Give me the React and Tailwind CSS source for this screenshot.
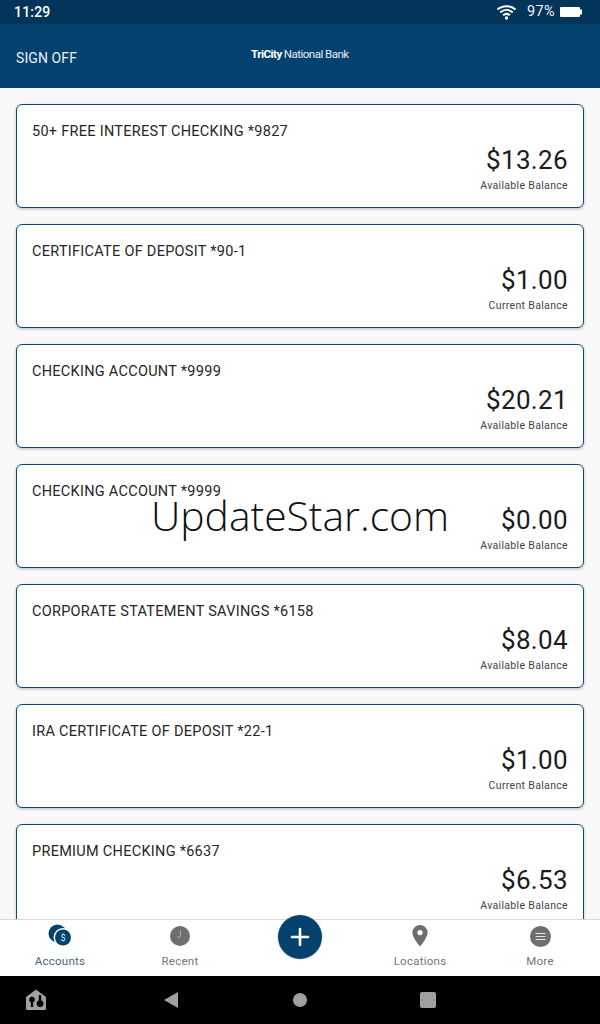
const accounts = [
  ["50+ FREE INTEREST CHECKING *9827", "$13.26", "Available Balance"],
  ["CERTIFICATE OF DEPOSIT *90-1", "$1.00", "Current Balance"],
  ["CHECKING ACCOUNT *9999", "$20.21", "Available Balance"],
  ["CHECKING ACCOUNT *9999", "$0.00", "Available Balance"],
  ["CORPORATE STATEMENT SAVINGS *6158", "$8.04", "Available Balance"],
  ["IRA CERTIFICATE OF DEPOSIT *22-1", "$1.00", "Current Balance"],
  ["PREMIUM CHECKING *6637", "$6.53", "Available Balance"],
];

function Card({ name, amount, label }) {
  return (
    <div className="h-[104px] shrink-0 rounded-[6px] border border-[#0b4a78] bg-white px-[15px] pt-[17px] shadow-[0_1px_3px_rgba(0,0,0,0.25)]">
      <div className="text-[14.5px] leading-[20px] tracking-[0.28px] text-[#262626]">{name}</div>
      <div className="mt-[2px] text-right text-[26px] leading-[32px] tracking-[0.35px] text-[#1c1c1c]">{amount}</div>
      <div className="mt-[1px] text-right text-[10.5px] leading-[18px] tracking-[0.33px] text-[#444444]">{label}</div>
    </div>
  );
}

function NavItem({ icon, label, active }) {
  return (
    <div className="flex w-[120px] flex-col items-center">
      <div className="flex h-[24px] w-[24px] items-center justify-center">{icon}</div>
      <div className={`mt-[5px] text-[11.5px] leading-[16px] tracking-[0.25px] ${active ? "text-[#46647f]" : "text-[#757575]"}`}>{label}</div>
    </div>
  );
}

export default function App() {
  return (
    <div className="relative flex h-[1024px] w-[600px] flex-col overflow-hidden bg-[#f8f8f8] font-['Roboto',sans-serif]">
      <div className="flex h-[24px] shrink-0 items-center justify-between bg-[#03355a] pl-[14px] pr-[18px] text-white">
        <span className="text-[14px] font-medium tracking-[0.2px]">11:29</span>
        <div className="flex items-center">
          <svg width="21" height="16" viewBox="0 0 20 16" fill="none" stroke="white" strokeWidth="2">
            <path d="M1 5.5C6 1 14 1 19 5.5" />
            <path d="M3.8 8.5C7.5 5.2 12.5 5.2 16.2 8.5" />
            <path d="M6.6 11.3C8.6 9.6 11.4 9.6 13.4 11.3" />
            <circle cx="10" cy="14" r="1.7" fill="white" stroke="none" />
          </svg>
          <span className="ml-[10px] text-[14.5px] tracking-[0.35px] text-[#f2f2f2]">97%</span>
          <svg className="ml-[5px]" width="22" height="10" viewBox="0 0 22 10">
            <path d="M0 1a1 1 0 0 1 1-1h18a1 1 0 0 1 1 1v1.5h2v5h-2V9a1 1 0 0 1-1 1H1a1 1 0 0 1-1-1z" fill="white" />
          </svg>
        </div>
      </div>

      <header className="relative flex h-[64px] shrink-0 items-center bg-[#03426f] px-[16px] pt-[4px] text-white">
        <span className="text-[14px] tracking-[0.1px] text-[#e8eff5]">SIGN OFF</span>
        <div className="absolute left-[251px] top-[22px] flex items-baseline text-[11.5px] leading-[16px] tracking-[-0.5px] text-[#e6edf3]">
          <span className="font-bold text-white">TriCity</span>
          <span className="ml-[2px]">National Bank</span>
        </div>
      </header>

      <main className="flex min-h-0 flex-1 flex-col gap-[16px] overflow-hidden px-[16px] pt-[16px]">
        {accounts.map(([name, amount, label], i) => (
          <Card key={i} name={name} amount={amount} label={label} />
        ))}
      </main>

      <nav className="relative flex h-[57px] shrink-0 items-start border-t border-[#d9d9d9] bg-white pt-[4px]">
        <NavItem
          active
          label="Accounts"
          icon={
            <svg width="24" height="24" viewBox="0 0 24 24">
              <circle cx="9.5" cy="9.5" r="9" fill="#03426f" />
              <circle cx="15" cy="13.500" r="9.5" fill="white" />
              <circle cx="15" cy="13.500" r="8" fill="#03426f" />
              <text x="15" y="17" textAnchor="middle" fontSize="9" fill="#dce6ee" fontFamily="Roboto">$</text>
            </svg>
          }
        />
        <NavItem
          label="Recent"
          icon={
            <svg width="20" height="20" viewBox="0 0 20 20">
              <circle cx="10" cy="10" r="10" fill="#6e6e6e" />
              <path d="M10.5 4v7H7" fill="none" stroke="#a8a8a8" strokeWidth="1" />
            </svg>
          }
        />
        <div className="w-[120px]" />
        <NavItem
          label="Locations"
          icon={
            <svg width="16" height="22" viewBox="0 0 16 22">
              <path d="M8 0a7.6 7.6 0 0 0-7.6 7.6C.4 13 8 21.5 8 21.5S15.600 13 15.600 7.600A7.600 7.600 0 0 0 8 0z" fill="#6e6e6e" />
              <circle cx="8" cy="7.600" r="2.600" fill="white" />
            </svg>
          }
        />
        <NavItem
          label="More"
          icon={
            <svg width="21" height="21" viewBox="0 0 21 21">
              <circle cx="10.500" cy="10.500" r="10.500" fill="#6e6e6e" />
              <path d="M5.500 7.500h10M5.500 10.500h10M5.500 13.500h10" stroke="#e4e4e4" strokeWidth="1.200" />
            </svg>
          }
        />
        <div className="absolute left-[278px] top-[-5px] flex h-[44px] w-[44px] items-center justify-center rounded-full bg-[#03426f] shadow-[0_0_0_1px_rgba(240,225,225,0.8)]">
          <svg width="20" height="20" viewBox="0 0 20 20">
            <path d="M10 2v16M2 10h16" stroke="white" strokeWidth="2.600" strokeLinecap="round" />
          </svg>
        </div>
      </nav>

      <div className="relative flex h-[48px] shrink-0 items-center bg-black">
        <svg className="absolute left-[26px] top-[13px]" width="20" height="21" viewBox="0 0 20 21">
          <path fillRule="evenodd" fill="#a0a0a0" d="M10 0.500L20 8v11.500a1.500 1.500 0 0 1-1.500 1.500h-17A1.500 1.500 0 0 1 0 19.500V8zM6 7.500a3 3 0 0 0-1.200 5.700V18h2.400v-4.800A3 3 0 0 0 6 7.500zM12.800 6v5.300a3.500 3.500 0 1 0 2.400 0V6z" />
        </svg>
        <svg className="absolute left-[164px] top-[16px]" width="14" height="16" viewBox="0 0 14 16">
          <path d="M14 0v16L0 8z" fill="#a0a0a0" />
        </svg>
        <div className="absolute left-[293px] top-[17px] h-[14px] w-[14px] rounded-full bg-[#a0a0a0]" />
        <div className="absolute left-[420px] top-[16px] h-[16px] w-[16px] rounded-[2px] bg-[#a0a0a0]" />
      </div>

      <div className="pointer-events-none absolute left-0 right-0 top-[487px] text-center font-['Open_Sans',sans-serif] text-[40.8px] font-light leading-[56px] text-[#111111]">
        UpdateStar.com
      </div>
    </div>
  );
}
